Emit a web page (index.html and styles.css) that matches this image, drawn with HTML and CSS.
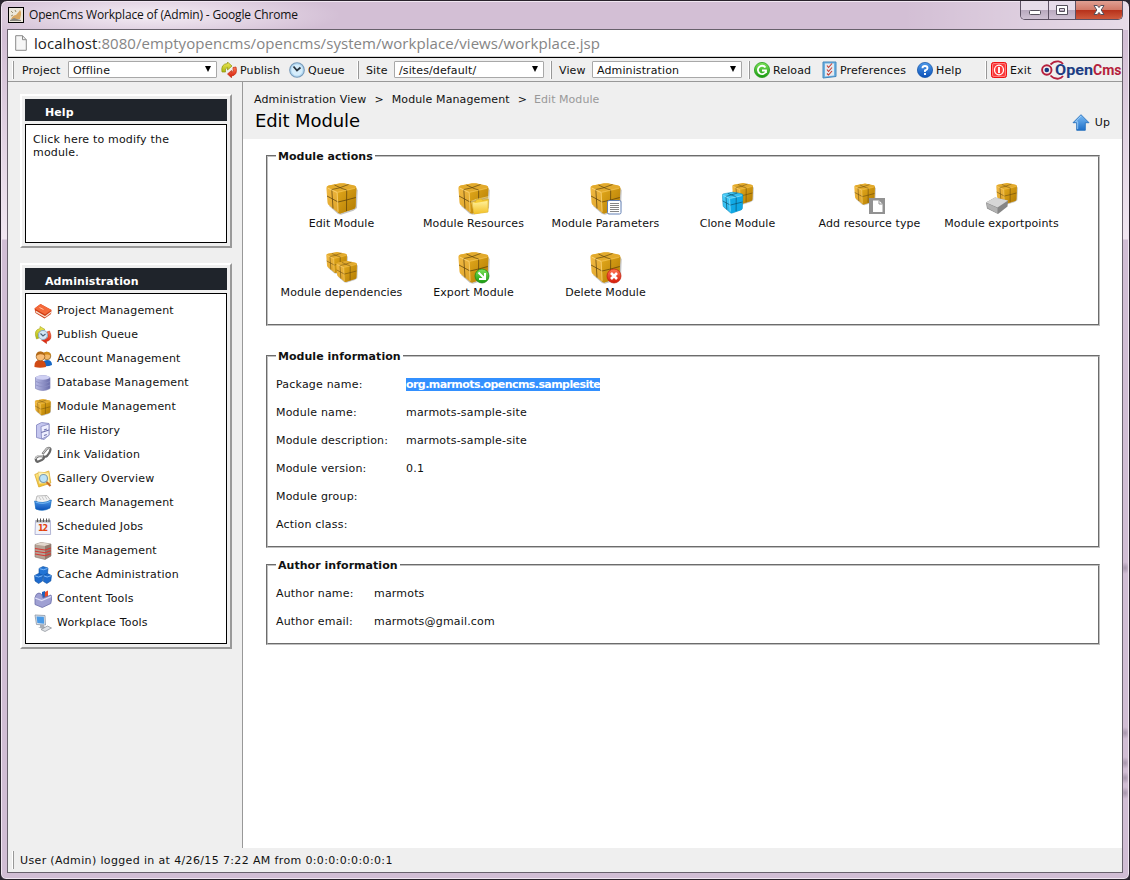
FILE: index.html
```html
<!DOCTYPE html>
<html lang="en">
<head>
<meta charset="utf-8">
<title>OpenCms Workplace of (Admin)</title>
<link rel="stylesheet" href="styles.css">
</head>
<body>
<svg class="defs" aria-hidden="true">
  <defs>
    <linearGradient id="gold" x1="0" y1="0" x2="1" y2="1"><stop offset="0" stop-color="#f2bb45"/><stop offset="1" stop-color="#d59a1c"/></linearGradient>
    <linearGradient id="goldR" x1="0" y1="0" x2="1" y2="1"><stop offset="0" stop-color="#e3a91c"/><stop offset="1" stop-color="#b07a02"/></linearGradient>
    <linearGradient id="cyan" x1="0" y1="0" x2="1" y2="1"><stop offset="0" stop-color="#4fd0fb"/><stop offset="1" stop-color="#12a9e6"/></linearGradient>
    <linearGradient id="blueG" x1="0" y1="0" x2="0" y2="1"><stop offset="0" stop-color="#4f9bea"/><stop offset="1" stop-color="#0a50b8"/></linearGradient>
    <linearGradient id="upG" x1="0" y1="0" x2="0" y2="1"><stop offset="0" stop-color="#7cbcf5"/><stop offset="1" stop-color="#1c6ec8"/></linearGradient>
    <linearGradient id="greenG" x1="0" y1="0" x2="0" y2="1"><stop offset="0" stop-color="#7ee35a"/><stop offset="1" stop-color="#179a10"/></linearGradient>
    <linearGradient id="redG" x1="0" y1="0" x2="0" y2="1"><stop offset="0" stop-color="#ff7a58"/><stop offset="1" stop-color="#d41a08"/></linearGradient>
    <linearGradient id="limeG" x1="0" y1="0" x2="0" y2="1"><stop offset="0" stop-color="#f3e95c"/><stop offset="1" stop-color="#a9b80c"/></linearGradient>
    <linearGradient id="dbG" x1="0" y1="0" x2="1" y2="0"><stop offset="0" stop-color="#b9bbe6"/><stop offset="1" stop-color="#6a6daa"/></linearGradient>
    <linearGradient id="folderG" x1="0" y1="0" x2="0" y2="1"><stop offset="0" stop-color="#fff09a"/><stop offset="1" stop-color="#f2bf24"/></linearGradient>
    <symbol id="cube" viewBox="0 0 32 32">
      <path d="M3 23l9 8 3 .8 12.500-4 3.500-2.800L31.700 7 29 4z" fill="#555" opacity=".35"/>
      <path d="M.4 5Q.2 3 2.500 2.500L14 .3q2-.3 4 0l10.500 2.200q2 .5 1.900 2.500L29.600 23.500q-.2 2-2 2.600L15 30.200q-1.800.6-3.200-.6L2.700 22q-1-1-1.200-2.500z" fill="url(#gold)"/>
      <path d="M11 9.500L30.300 5 29.600 23.500q-.2 2-2 2.600L15 30.200q-1.500.5-2.700-.3z" fill="url(#goldR)"/>
      <path d="M1 4Q1.500 3 3 2.600L14 .6q2-.3 4 0L29 3q1 .5.800 1.600L12 8.500q-1.500.3-3-.6z" fill="#e2aa2c"/>
      <g fill="none">
        <path d="M1 13l5 2.700 6 3.300 8.500-2 9.300-2.500M5.800 6.500L7 25.500M20.700 7L20.500 28" stroke="#553c0c" stroke-width="1" opacity=".7"/>
        <path d="M5.800 6.500L13 5l9.500-3.500M20.700 7L16 5.500 8.500 2" stroke="#553c0c" stroke-width=".9" opacity=".7"/>
        <path d="M2 5.200l8 3.800 1.200.3.900 19.500" stroke="#ffdc85" stroke-width="1" opacity=".7"/>
        <path d="M12 9.300L29 5.300" stroke="#ffd467" stroke-width=".8" opacity=".6"/>
      </g>
    </symbol>
    <symbol id="cubeBlue" viewBox="0 0 32 32">
      <path d="M.5 5Q.3 3 2.500 2.500L14 .5q2-.3 4 0l10.500 2q2 .5 1.900 2.500L29.600 23.500q-.2 2-2 2.600L15 30.600q-1.800.6-3.200-.7L2.700 22q-1-1-1.200-2.500z" fill="url(#cyan)" stroke="#0a86b8" stroke-width=".7"/>
      <path d="M11 9.500L30.300 5 29.600 23.500q-.2 2-2 2.600L13 31z" fill="#0ba5e4" opacity=".8"/>
      <path d="M1 13l11 6 18-4.500M5.800 6.500L7 25.500M20.700 7L20.500 28M5.800 6.500L22.500 1.500M20.700 7L8.500 2" fill="none" stroke="#0b4c69" stroke-width="1.100" opacity=".85"/>
      <path d="M2 5.200l9 4.100 1 19M12 9.300L29 5.300" stroke="#9ce8ff" stroke-width="1" fill="none"/>
    </symbol>
    <symbol id="publish" viewBox="0 0 16 16">
      <path d="M1 10Q-.5 2 6.500 1.500V0L11 4 6.500 8V5.500Q3.500 6 4.500 10z" fill="url(#limeG)" stroke="#8c9410" stroke-width=".7"/>
      <path d="M15 5q2 8-4.500 9v1.700L6.500 12 10.500 8.500v2Q13 10 12 5.500z" fill="url(#redG)" stroke="#bf2a0c" stroke-width=".7"/>
    </symbol>
    <symbol id="clock" viewBox="0 0 16 16">
      <circle cx="8" cy="8" r="7.300" fill="#b5daf3" stroke="#7799b8" stroke-width="1.100"/>
      <circle cx="8" cy="8" r="5.500" fill="#d6edfb"/>
      <path d="M4.500 4.500L8 8.500l3.500-3" fill="none" stroke="#28343f" stroke-width="1.800"/>
    </symbol>
  </defs>
</svg>

<div class="window">
  <header class="titlebar">
    <svg class="app-icon" viewBox="0 0 16 16"><rect x=".5" y=".5" width="15" height="15" fill="#ece7da" stroke="#000"/><path d="M3 12Q5 8 8 8l3-3.500 1-1.500 1 2v3l-1 4z" fill="#d9a660"/><path d="M2 13l4-2 3 1 4 1v1H2z" fill="#8a877e"/><path d="M3 4l2 2M7 3l1 2M3 9l2-1" stroke="#9b8f70"/></svg>
    <span class="window-title">OpenCms Workplace of (Admin) - Google Chrome</span>
    <div class="window-buttons">
      <span class="wb wb-min"><svg width="14" height="14" viewBox="0 0 14 14"><rect x="1.500" y="7.500" width="11" height="4" rx="1" fill="#fff" stroke="#55505c"/></svg></span>
      <span class="wb wb-max"><svg width="14" height="14" viewBox="0 0 14 14"><path fill-rule="evenodd" d="M1.500 2.500h11v9h-11zM4.500 5.500v3h5v-3z" fill="#fff" stroke="#55505c"/></svg></span>
      <span class="wb wb-close"><svg width="14" height="14" viewBox="0 0 14 14"><path d="M2 2.500h3.300L7 4.600l1.700-2.100H12L9.200 7l2.800 4.500H8.700L7 9.400l-1.700 2.100H2L4.800 7z" fill="#fff" stroke="#55505c"/></svg></span>
    </div>
  </header>

  <div class="client">
    <div class="address">
      <svg width="12" height="16" viewBox="0 0 12 16"><path d="M.7.7h6.800l3.800 4v10.600H.7z" fill="#f6f6f6" stroke="#8b8b8b"/><path d="M7.500.7v4h3.800" fill="none" stroke="#8b8b8b"/></svg>
      <span class="url"><b>localhost</b>:8080/emptyopencms/opencms/system/workplace/views/workplace.jsp</span>
    </div>

    <nav class="toolbar">
      <i class="sep sep-handle"></i>
      <span>Project</span>
      <div class="select">Offline<i class="arrow"></i></div>
      <a class="tool tool-publish"><svg width="16" height="16"><use href="#publish"/></svg>Publish</a>
      <a class="tool"><svg width="16" height="16"><use href="#clock"/></svg>Queue</a>
      <i class="sep sep-a"></i>
      <span>Site</span>
      <div class="select">/sites/default/<i class="arrow"></i></div>
      <i class="sep sep-b"></i>
      <span>View</span>
      <div class="select">Administration<i class="arrow"></i></div>
      <i class="sep sep-b"></i>
      <a class="tool"><svg width="16" height="16" viewBox="0 0 16 16"><circle cx="8" cy="8" r="7.600" fill="url(#greenG)" stroke="#2a9e1c" stroke-width=".8"/><path d="M11.500 5.500A4.200 4.200 0 1 0 12 9.500M8 8.500h4v2.500" fill="none" stroke="#fff" stroke-width="1.800"/></svg>Reload</a>
      <a class="tool"><svg width="15" height="18" viewBox="0 0 15 18"><path d="M1 1h13v14.500L1 17z" fill="#6fb2e2" stroke="#4287bd"/><path d="M3 2.500h9v12L3 15.500z" fill="#e4eaf0"/><path d="M5 4.500l1.500 2 3.500-4M5 8.500l1.500 2 3.500-4M5 12.500l1.500 1.500 3.500-4" stroke="#c8382c" stroke-width="1.100" fill="none"/></svg>Preferences</a>
      <a class="tool"><svg width="16" height="16" viewBox="0 0 16 16"><circle cx="8" cy="8" r="7.600" fill="url(#blueG)" stroke="#0d4fa5" stroke-width=".7"/><path d="M5.500 6.200Q5.500 4 8 4t2.500 2.200Q10.500 7.500 8 8.500V10M8 11v2" fill="none" stroke="#fff" stroke-width="1.900"/></svg>Help</a>
      <i class="sep sep-a"></i>
      <a class="tool"><svg width="16" height="16" viewBox="0 0 16 16"><rect x=".5" y=".5" width="15" height="15" rx="2" fill="#fb3a3a" stroke="#ee1111"/><rect x="1.500" y="1.500" width="13" height="13" rx="1.500" fill="none" stroke="#ff8c8c" stroke-width=".8"/><ellipse cx="8" cy="8" rx="4.500" ry="4.800" fill="none" stroke="#fff" stroke-width="1.300"/><path d="M8 5v6" stroke="#fff" stroke-width="1.900"/></svg>Exit</a>
      <svg class="logo" width="81" height="20" viewBox="0 0 81 20"><g fill="none"><path d="M9.500 4.500Q13 .9 17.500 1.400q3 .5 4.500 2.600M9.500 15.500Q13 19.200 17.500 18.700q3-.5 4.500-2.600" stroke="#b51f3d" stroke-width="1.800"/><circle cx="5.800" cy="10" r="4.700" stroke="#b51f3d" stroke-width="1.900"/></g><circle cx="5.800" cy="10" r="2.300" fill="#173a80"/><text class="logo-text" x="14" y="15" textLength="38" lengthAdjust="spacingAndGlyphs" fill="#1d3d83">Open</text><text class="logo-text" x="52" y="15" textLength="28.500" lengthAdjust="spacingAndGlyphs" fill="#b51f3d">Cms</text></svg>
    </nav>

    <div class="workspace">
      <aside class="sidebar">
        <section class="panel panel-help">
          <h2>Help</h2>
          <div class="panel-body help-text">Click here to modify the<br>module.</div>
        </section>
        <section class="panel panel-admin">
          <h2>Administration</h2>
          <ul class="panel-body menu">
            <li><svg viewBox="0 0 18 18"><path d="M.5 6.500l6-4.500 11 6-.5 4-6.500 4.500L1.500 11z" fill="#cc3a12"/><path d="M.5 6.500l6-4.500 11 6-6.500 4.500z" fill="#f4693a"/><path d="M1.500 8.500l9.500 5.500 6-4.500v1.600L11 15.500 2 10.500z" fill="#f7e1d2"/><path d="M5.500 5.500l4 2" stroke="#ffc2a2"/></svg>Project Management</li>
            <li><svg viewBox="0 0 18 18"><path d="M2.500 13Q-1 4 6 2.500V.5l5 3-5 3.200V5Q2.500 7 5 12z" fill="url(#limeG)" stroke="#a3a51c" stroke-width=".6"/><path d="M15.500 5q4 9-3 10.500v2L7.500 14l5-3v2Q15 11 13 6z" fill="url(#redG)" stroke="#c8330f" stroke-width=".6"/><circle cx="9" cy="9" r="4.500" fill="#d4e8f8" stroke="#8fa9c2" stroke-width="1.100"/><path d="M6.500 7.500L9 10l2.500-2" stroke="#4c6178" stroke-width="1.100" fill="none"/></svg>Publish Queue</li>
            <li><svg viewBox="0 0 18 18"><path d="M8 16q0-6 5-6 5 0 5 5-4 2-10 1z" fill="#1767c4"/><circle cx="13" cy="6" r="3.800" fill="#f3b768" stroke="#7d5517" stroke-width=".7"/><path d="M9 5q1-4 5-3 3 1 3 4-2-2-4-1.500z" fill="#d18b1c"/><path d="M.5 17Q0 10 6 10t6 7q-6 1.500-11.500 0z" fill="#d04a14"/><circle cx="6.500" cy="6.500" r="4.300" fill="#f9bd78" stroke="#8c5519" stroke-width=".7"/><path d="M2 6q0-5 5-4.500 4 .5 4 4-4-2-6-1z" fill="#b46a17"/></svg>Account Management</li>
            <li><svg viewBox="0 0 18 18"><path d="M1.500 3.500Q9-.5 16 3.500v11q-7 4-14.500 0z" fill="url(#dbG)" stroke="#8285b9" stroke-width=".7"/><ellipse cx="8.800" cy="3.500" rx="7" ry="2.200" fill="#cfd0f3"/><path d="M2 7.500q7 3.500 14 0M2 11q7 3.500 14 0" fill="none" stroke="#8c8ec3" stroke-width=".8"/></svg>Database Management</li>
            <li><svg viewBox="-1 -2 34 34"><use href="#cube" width="32" height="32"/></svg>Module Management</li>
            <li><svg viewBox="0 0 18 18"><path d="M2.500 3l5-2.500 7.500 1V13l-5 4.500-7.500-2z" fill="#c5c7ef" stroke="#8083be" stroke-width=".8"/><path d="M7 4.500L15 2v11.500L7.500 17z" fill="#eeefff" stroke="#8486bf" stroke-width=".8"/><path d="M7.200 10.500L15 8M10 8l2.800-.9M10 13.500l2.800-1" stroke="#6f72ae" stroke-width="1.100"/></svg>File History</li>
            <li><svg viewBox="0 0 18 18"><g fill="none" stroke-linejoin="round"><path d="M1.800 13.500q-.5-2.500 3.500-3.500l4 .5q2 1.500-1.500 3.500l-4 1.800q-1.500 0-2-2.300z" stroke="#666" stroke-width="2.200"/><path d="M8.500 8l4.500-5.500q3-1.300 3.500.5 0 3-3.500 7-2.500 1.500-4.500 0" stroke="#666" stroke-width="2.200"/><path d="M1.600 13q0-2.500 3.500-3.400l4 .5M8.800 7.500L13 2.300q2-.8 3 .2" stroke="#d2d2d2" stroke-width="1.100"/></g></svg>Link Validation</li>
            <li><svg viewBox="0 0 18 18"><path d="M.8 4.500l5-2 1 1.500 8-3 2 12-12 4z" fill="url(#folderG)" stroke="#d9a72e" stroke-width=".8"/><path d="M4 2l11 1 1 10-11 1z" fill="#fff2b0" stroke="#e0bb4e" stroke-width=".6"/><circle cx="9.500" cy="8.500" r="4" fill="#bce3f8" stroke="#7f9cae" stroke-width="1.200"/><path d="M12.500 12l4 4" stroke="#ca6c25" stroke-width="2.200"/></svg>Gallery Overview</li>
            <li><svg viewBox="0 0 18 18"><path d="M2 6l1-4 10-.5 3 4-3 4H3z" fill="#f3f3f3" stroke="#aaa" stroke-width=".8"/><path d="M5 3l2 3M8 2.500l2 3.500M11 2l2 3.500" stroke="#bbb" stroke-width=".8"/><path d="M.7 7q8 3.500 16.600-1L16 14q-7 4-14.200 1z" fill="url(#blueG)" stroke="#0963ba" stroke-width=".7"/><path d="M1.500 8q7.500 3 15-.8" fill="none" stroke="#77baf5"/></svg>Search Management</li>
            <li><svg viewBox="0 0 18 18"><path d="M1.500 2.500h14.800l.3 14H1z" fill="#f0f1fa" stroke="#a1a4ca" stroke-width=".8"/><path d="M2 2h14v2.500H2z" fill="#aaa"/><path d="M3.500 .5v3.500M6.500 .5v3.500M9.500 .5v3.500M12.500 .5v3.500M15 .5v3.500" stroke="#555" stroke-width="1"/><text class="cal" x="4" y="12.500" textLength="10">12</text></svg>Scheduled Jobs</li>
            <li><svg viewBox="0 0 18 18"><path d="M1 2.500l6-2L17 2v12l-6 3.500L1 15z" fill="#b5a396" stroke="#85756c" stroke-width=".6"/><path d="M1 2.500l6-2L17 2l-6 2z" fill="#e2d8ce"/><path d="M11 4l6-2v12l-6 3.500z" fill="#92796d"/><path d="M1 6.500l10 1.500 6-2M1 9.200l10 1.500 6-2M1 12l10 1.700 6-2" fill="none" stroke="#d53a35" stroke-width="1.100"/></svg>Site Management</li>
            <li><svg viewBox="0 0 18 18"><g stroke="#0a4d9e" stroke-width=".6"><path d="M5 2.500l4-2 5 1.500-.5 5.500L9.500 10 5 8z" fill="#2274d5"/><path d="M.6 9.500l4-2 4.500 2-.5 5.500-4 2.500L1 15z" fill="#1e6bcd"/><path d="M9.300 9.500l4.200-2 4 2-.7 5.500-4 2.500-3.300-2z" fill="#1e6bcd"/></g><path d="M5.500 2.700l4 1L13.500 2.500M1 9.800l3.500 1.200 4-1.300M9.700 9.800l3.500 1.200 4-1.300" fill="none" stroke="#8bc2fb" stroke-width=".9"/></svg>Cache Administration</li>
            <li><svg viewBox="0 0 18 18"><path d="M8 2l3-1v10H8z" fill="#1b61bf"/><path d="M11 2l3-1.500v8l-1.500 3h-2z" fill="#ef4b27"/><path d="M1 7.500Q2 3 5 3t4 5l8-3 .8 3-1 5.500-8.500 4L1 14.500z" fill="#9fa0d3" stroke="#6b6da9" stroke-width=".8"/><path d="M1.200 8l6.500 2.500 9.500-4" fill="none" stroke="#dedff8" stroke-width="1.200"/></svg>Content Tools</li>
            <li><svg viewBox="0 0 18 18"><path d="M1 1l10 .5.500 9.500-9-.5z" fill="#dce2e9" stroke="#8b96a4" stroke-width=".8"/><path d="M2.500 2.400l7.300.3.400 7-6.800-.7z" fill="#4a9ae6"/><path d="M6 11h4v2.500H6zM4 13.500l7-1v3z" fill="#a9aeb5"/><path d="M7 15.500l6.500-3.500 4 2-6.500 3.500z" fill="#dfe2e6" stroke="#858b94" stroke-width=".7"/></svg>Workplace Tools</li>
          </ul>
        </section>
      </aside>

      <main class="main">
        <div class="page-head">
          <div>
            <div class="crumbs"><span>Administration View</span><span>&gt;</span><span>Module Management</span><span>&gt;</span><span class="current">Edit Module</span></div>
            <h1>Edit Module</h1>
          </div>
          <a class="up"><svg width="18" height="17" viewBox="0 0 18 17"><path d="M9 .7l8 8h-3.700v7.600H4.700V8.700H1z" fill="url(#upG)" stroke="#2a73bd" stroke-width=".9"/><path d="M9 2L3.500 7.800h2.200v7.300" fill="none" stroke="#a9d5fb" stroke-width=".8"/></svg>Up</a>
        </div>

        <div class="content">
          <fieldset class="fs-actions">
            <legend>Module actions</legend>
            <div class="actions">
              <a><svg viewBox="0 0 32 32"><use href="#cube"/></svg>Edit Module</a>
              <a><svg viewBox="0 0 32 32"><use href="#cube"/><path d="M13 18l5-2 13-3-1 17-14 1z" fill="#fff3b6" opacity=".55"/><path d="M14.500 19l3-.5 1-2 5-.7 1 1.500 6-1-.5 12.700L16 31z" fill="#f6cb35" stroke="#c79a1e" stroke-width=".5"/><path d="M14.500 19l3 1 12-2 .2 11L16 31z" fill="url(#folderG)"/></svg>Module Resources</a>
              <a><svg viewBox="0 0 32 32"><use href="#cube"/><rect x="17.500" y="17.500" width="13.500" height="13.500" rx="1.500" fill="#fff" stroke="#6380b5"/><path d="M20 20.500h9M20 22.500h9M20 24.500h9M20 26.500h9M20 28.500h9" stroke="#777" stroke-width=".9"/></svg>Module Parameters</a>
              <a><svg viewBox="0 0 32 32"><use href="#cube" x="10" y="0" width="22" height="22"/><use href="#cubeBlue" x="0" y="8.500" width="22" height="23"/></svg>Clone Module</a>
              <a><svg viewBox="0 0 32 32"><use href="#cube" x="0" y="0" width="22" height="23"/><path d="M15 15h16v16H15z" fill="#929292"/><path d="M19 17.500h6l3.500 3.500v8H19z" fill="#fff"/><path d="M25 17.500V21h3.500" fill="none" stroke="#929292"/></svg>Add resource type</a>
              <a><svg viewBox="0 0 32 32"><use href="#cube" x="10" y="0" width="22" height="22"/><path d="M0 19.500l9-5 13 3-.5 6L12 31 1 25.500z" fill="#858585"/><path d="M0 19.500l9-5 13 3-10.500 7z" fill="#d6d6d6"/><path d="M.5 20l11 5v5.500L1.500 25z" fill="#b2b2b2"/></svg>Module exportpoints</a>
              <a><svg viewBox="0 0 32 32"><use href="#cube" x="0" y="0" width="22" height="22"/><use href="#cube" x="10" y="8.500" width="22" height="23"/></svg>Module dependencies</a>
              <a><svg viewBox="0 0 32 32"><use href="#cube"/><circle cx="24" cy="24" r="7" fill="url(#greenG)" stroke="#158712" stroke-width=".7"/><path d="M20.500 20.500l6 6M27 21v6h-6" stroke="#fff" stroke-width="2.100" fill="none"/></svg>Export Module</a>
              <a><svg viewBox="0 0 32 32"><use href="#cube"/><circle cx="24" cy="24" r="7" fill="url(#redG)" stroke="#c31b0c" stroke-width=".7"/><path d="M21 21l6 6M27 21l-6 6" stroke="#fff" stroke-width="2.600"/></svg>Delete Module</a>
            </div>
          </fieldset>

          <fieldset class="fs-info">
            <legend>Module information</legend>
            <dl class="props">
              <dt>Package name:</dt><dd><mark>org.marmots.opencms.samplesite</mark></dd>
              <dt>Module name:</dt><dd>marmots-sample-site</dd>
              <dt>Module description:</dt><dd>marmots-sample-site</dd>
              <dt>Module version:</dt><dd>0.1</dd>
              <dt>Module group:</dt><dd></dd>
              <dt>Action class:</dt><dd></dd>
            </dl>
          </fieldset>

          <fieldset class="fs-author">
            <legend>Author information</legend>
            <dl class="props props-author">
              <dt>Author name:</dt><dd>marmots</dd>
              <dt>Author email:</dt><dd>marmots@gmail.com</dd>
            </dl>
          </fieldset>
        </div>
      </main>
    </div>

    <footer class="status"><i class="sep sep-handle"></i>User (Admin) logged in at 4/26/15 7:22 AM from 0:0:0:0:0:0:0:1</footer>
  </div>
</div>
</body>
</html>
```
FILE: styles.css
```css
* { box-sizing: border-box; }
html, body { margin: 0; height: 880px; overflow: hidden; background: #2a2630; }
body { font: 11px/13px "DejaVu Sans", Verdana, sans-serif; letter-spacing: .12px; color: #111; }
h1, h2, ul, dl, dd { margin: 0; padding: 0; }
svg { display: block; flex: none; }
.defs { position: absolute; width: 0; height: 0; }

/* window frame */
.window {
  display: flex; flex-direction: column;
  width: 1130px; height: 880px; padding: 0 6px 6px;
  border: 1px solid #28222b; border-radius: 7px 7px 6px 6px;
  box-shadow: inset 0 0 0 1px #f0e6f1;
  background:
    radial-gradient(ellipse 190px 26px at 150px 14px, rgba(250,245,250,.85), rgba(250,245,250,0)),
    radial-gradient(ellipse 5px 6px at 1124px 567px, #a695ab, rgba(166,149,171,0)),
    radial-gradient(ellipse 5px 6px at 1124px 732px, #a695ab, rgba(166,149,171,0)),
    radial-gradient(ellipse 5px 6px at 1124px 762px, #a695ab, rgba(166,149,171,0)),
    radial-gradient(ellipse 5px 6px at 1124px 777px, #a695ab, rgba(166,149,171,0)),
    radial-gradient(ellipse 5px 6px at 1124px 792px, #a695ab, rgba(166,149,171,0)),
    linear-gradient(90deg, rgba(255,255,255,0) 80%, rgba(255,255,255,.45)) 0 0 / 100% 29px no-repeat,
    linear-gradient(#d3bfd5 0 40px, #f1e7f1 238px, #d1bdd4 239px);
}
.titlebar { display: flex; align-items: flex-start; height: 28px; padding-left: 1px; }
.app-icon { width: 16px; height: 16px; margin-top: 6px; }
.window-title { margin: 5px 0 0 5px; font: 12px/18px "Open Sans", "Noto Sans", sans-serif; letter-spacing: -.16px; color: #111; }
.window-buttons { display: flex; margin-left: auto; height: 19px; border: 1px solid #5c5163; border-top: 0; border-radius: 0 0 5px 5px; overflow: hidden; }
.wb { display: flex; justify-content: center; align-items: center; height: 18px; background: linear-gradient(#e6dce9 48%, #b8a9be 50%, #cfc1d3); border-right: 1px solid #5c5163; }
.wb-min { width: 28px; }
.wb-max { width: 27px; }
.wb-close { width: 46px; border: 0; background: linear-gradient(#e0a093 0, #d27a68 48%, #b7321b 52%, #cf5a3d); }
.client { flex: 1; display: flex; flex-direction: column; min-height: 0; border: 1px solid #68616c; background: #efefef; }

/* address */
.address { display: flex; align-items: center; height: 27px; padding-left: 7px; background: #fff; border-bottom: 1px solid #d8d8d8; }
.url { margin-left: 7px; font: 15px/24px "Open Sans", "Noto Sans", sans-serif; letter-spacing: .06px; color: #858585; }
.url b { font-weight: 400; color: #222; }

/* toolbar */
.toolbar {
  display: grid; align-items: center; height: 25px; padding-top: 1px;
  grid-template-columns: 14px 46px 149px 72px 68px 9px 28px 150px 15px 33px 150px 12px 68px 95px 68px 6px 50px 1fr;
  border-top: 1px solid #000; border-bottom: 1px solid #989898;
}
.sep { width: 2px; height: 18px; border-left: 1px solid #fff; border-right: 1px solid #989898; }
.sep-handle { margin-left: 4px; }
.sep-b { margin-left: 6px; }
.select { display: flex; justify-content: space-between; align-items: center; height: 17px; padding: 1px 5px 0 4px; margin-bottom: 1px; background: #fff; border: 1px solid #a8a8a8; border-radius: 1px; }
.arrow { border: 3.500px solid transparent; border-top: 6px solid #000; border-bottom: 0; margin-top: -2px; }
.tool { display: flex; align-items: center; gap: 3px; }
.tool-publish { padding-left: 4px; }
.logo-text { font: bold 14px Roboto, sans-serif; letter-spacing: 0; }

/* sidebar */
.workspace { flex: 1; display: flex; min-height: 0; }
.sidebar { width: 235px; padding: 12px 0 0 12px; border-right: 1px solid #989898; letter-spacing: .18px; }
.panel { display: flex; flex-direction: column; gap: 3px; width: 212px; padding: 3px; border: 2px solid; border-color: #fff #999 #999 #fff; }
.panel-help { height: 154px; margin-bottom: 15px; }
.panel-admin { height: 386px; }
.panel h2 { height: 22px; padding: 7px 0 0 20px; background: #1f242b; color: #fff; font-size: 11px; line-height: 13px; letter-spacing: .1px; }
.panel-body { flex: 1; background: #fff; border: 1px solid #000; }
.help-text { padding: 8px 7px; }
.menu { list-style: none; padding: 4px 8px; }
.menu li { display: flex; align-items: center; gap: 5px; height: 24px; }
.menu svg { width: 18px; height: 18px; margin-top: 1px; }
.cal { font: bold 8px "DejaVu Sans", sans-serif; letter-spacing: 0; fill: #e2430c; }

/* main area */
.main { flex: 1; background: #fff; }
.page-head { display: flex; justify-content: space-between; height: 57px; padding: 11px 12px 0 11px; background: #efefef; }
.crumbs { display: flex; gap: 8px; }
.crumbs .current { color: #999; margin-left: -1px; letter-spacing: .04px; }
h1 { margin: 4px 0 0 1px; font-size: 18px; line-height: 22px; font-weight: 400; letter-spacing: -.1px; color: #000; }
.up { display: flex; align-items: center; gap: 5px; height: 17px; margin-top: 21px; }
.content { padding: 11px 22px 0 23px; }
fieldset { margin: 0; padding: 0 8px; border: 2px groove #c0c0c0; }
legend { padding: 2px 2px 0; font-weight: bold; line-height: 10px; letter-spacing: .04px; }
.fs-actions { height: 176px; margin-bottom: 24px; }
.fs-info { height: 198px; margin-bottom: 11px; }
.fs-author { height: 86px; }
.actions { display: grid; grid-template-columns: repeat(6, 132px); grid-auto-rows: 69px; padding-top: 21px; margin-right: -1px; margin-left: -.5px; letter-spacing: .08px; }
.actions a { display: flex; flex-direction: column; align-items: center; gap: 2px; white-space: nowrap; }
.actions svg { width: 32px; height: 32px; margin-left: 1px; }
.props { display: grid; grid-template-columns: 130px 1fr; grid-auto-rows: 28px; align-items: center; padding-top: 8px; letter-spacing: .2px; }
.props-author { grid-template-columns: 98px 1fr; letter-spacing: .18px; }
mark { background: #3390ff; color: #fff; font-weight: bold; letter-spacing: -.57px; }

.status { display: flex; align-items: center; height: 24px; letter-spacing: .36px; }
.status .sep { margin-right: 6px; }
```
